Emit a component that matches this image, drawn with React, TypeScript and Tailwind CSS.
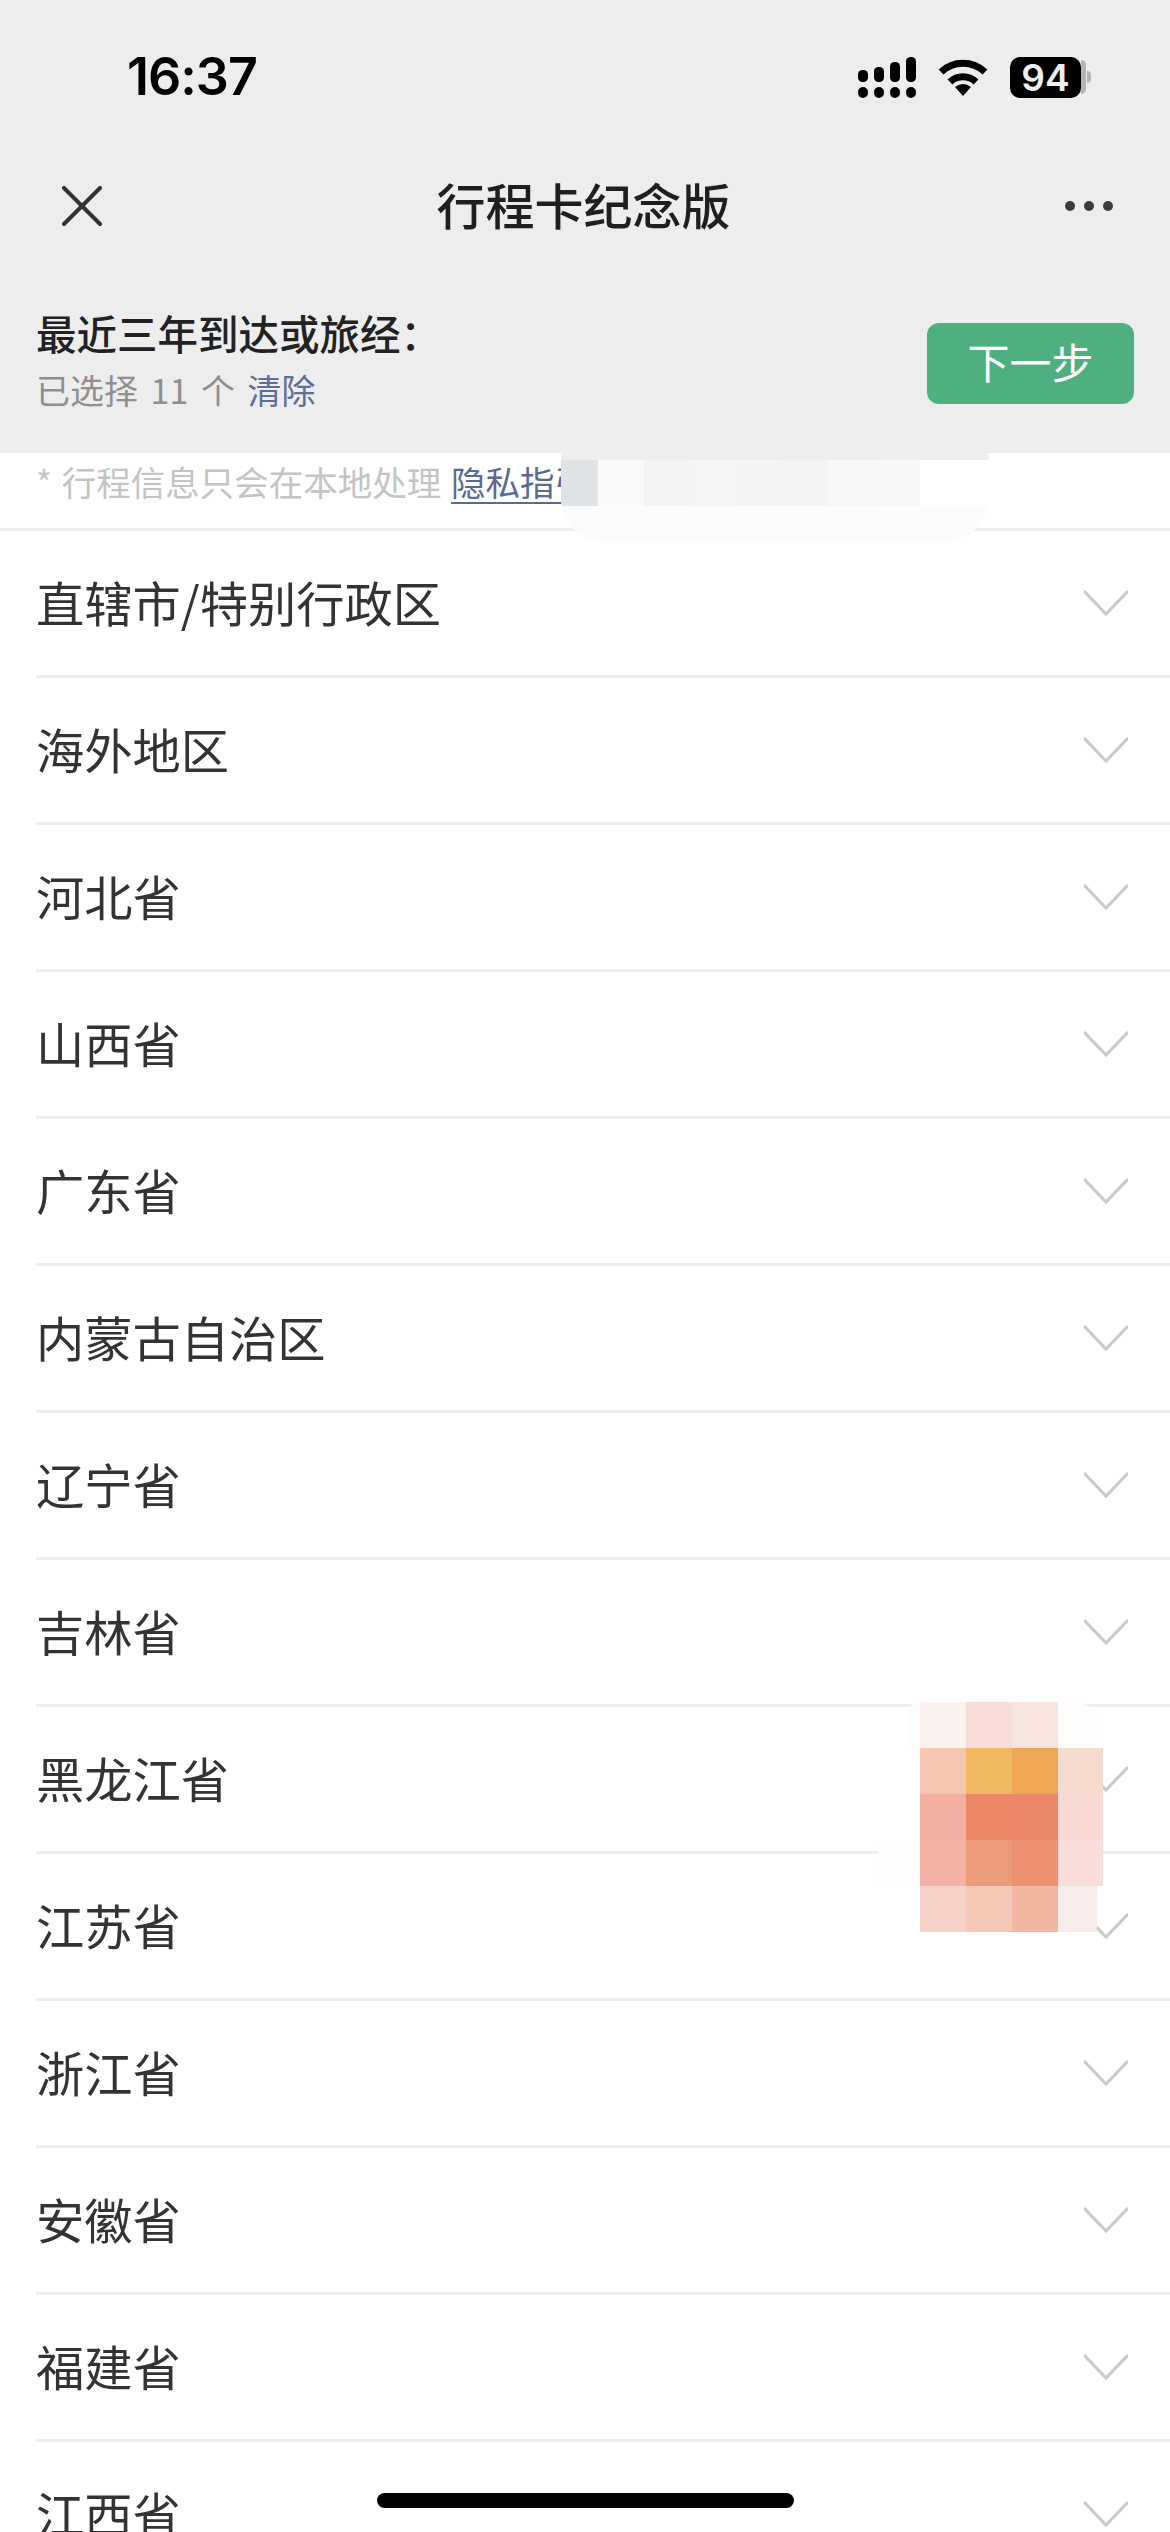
const regions = [
  '直辖市/特别行政区',
  '海外地区',
  '河北省',
  '山西省',
  '广东省',
  '内蒙古自治区',
  '辽宁省',
  '吉林省',
  '黑龙江省',
  '江苏省',
  '浙江省',
  '安徽省',
  '福建省',
  '江西省',
];

const noteCells = ['#fafafa', '#f3f3f3', '#f5f5f5', '#f4f4f4', '#f3f3f3', '#f7f7f7', '#f8f8f8'];

const stickerCells = [
  ['#fbf2f0', '#f8ddd9', '#f8e5e0', '#fefdfb'],
  ['#f5c7b0', '#f0b860', '#eea855', '#f5dbcf'],
  ['#f4afa3', '#ee8765', '#eb876b', '#f9d9d4'],
  ['#f4b2a5', '#ec9c7a', '#ee9072', '#f9dedb'],
  ['#f5d1c9', '#f4c8b5', '#f2b7a1', '#f7ece9'],
];

function SignalIcon() {
  return (
    <svg width="58" height="41" viewBox="0 0 58 41" fill="black">
      <rect x="0" y="13" width="10" height="12" rx="4.5" />
      <rect x="16" y="10" width="10" height="15" rx="4.5" />
      <rect x="32" y="5" width="10" height="20" rx="4.5" />
      <rect x="48" y="0" width="10" height="25" rx="4.5" />
      <rect x="0" y="30" width="10" height="11" rx="5" />
      <rect x="16" y="30" width="10" height="11" rx="5" />
      <rect x="32" y="30" width="10" height="11" rx="5" />
      <rect x="48" y="30" width="10" height="11" rx="5" />
    </svg>
  );
}

function WifiIcon() {
  return (
    <svg width="50" height="37" viewBox="0 0 50 37" fill="none" stroke="black" strokeWidth="7">
      <path d="M3 13 A32 32 0 0 1 47 13" />
      <path d="M12 23 A19 19 0 0 1 38 23" />
      <path d="M17 28 Q25 22 33 28 L25 37 Z" fill="black" stroke="none" />
    </svg>
  );
}

function Chevron() {
  return (
    <svg width="44" height="27" viewBox="0 0 44 27" fill="none" stroke="#c9c9c9" strokeWidth="3">
      <path d="M0 1 L22 24 L44 1" />
    </svg>
  );
}

export default function App() {
  return (
    <div className="relative h-[2532px] w-[1170px] overflow-hidden bg-white font-['Noto_Sans_CJK_SC',sans-serif]">
      {/* Status bar and title */}
      <header className="flex h-[453px] flex-col bg-[#ededed]">
        <div className="flex h-[154px] items-center justify-between pl-[127px] pr-[79px]">
          <span className="font-['Inter',sans-serif] text-[52px] font-semibold leading-none tracking-[-1px] text-black">
            16:37
          </span>
          <div className="flex items-center gap-[22px]">
            <SignalIcon />
            <WifiIcon />
            <div className="flex items-center">
              <div className="flex h-[41px] w-[71px] items-center justify-center rounded-[10px] bg-black font-['Inter',sans-serif] text-[37px] font-semibold leading-none text-[#eeeeee]">
                94
              </div>
              <div className="h-[34px] w-[5px] rounded-r-[5px] bg-[#b4b4b4]" />
              <div className="ml-px h-[12px] w-[4px] rounded-r-[4px] bg-[#b4b4b4]" />
            </div>
          </div>
        </div>

        <div className="flex h-[104px] items-center justify-between pl-[62px] pr-[57px]">
          <svg width="40" height="40" viewBox="0 0 40 40" stroke="#333333" strokeWidth="4" strokeLinecap="round">
            <path d="M2 2 L38 38 M38 2 L2 38" />
          </svg>
          <h1 className="pb-[6px] text-[49px] font-medium leading-none text-[#1f1f1f]">行程卡纪念版</h1>
          <div className="flex w-[48px] justify-between">
            <span className="h-[10px] w-[10px] rounded-full bg-[#3c3c3c]" />
            <span className="h-[10px] w-[10px] rounded-full bg-[#3c3c3c]" />
            <span className="h-[10px] w-[10px] rounded-full bg-[#3c3c3c]" />
          </div>
        </div>

        <div className="flex items-start justify-between pl-[36px] pr-[36px] pt-[49px]">
          <div>
            <p className="text-[40.5px] font-medium leading-[52px] text-[#222222]">最近三年到达或旅经：</p>
            <p className="mt-[5px] text-[34px] leading-[52px] text-[#8f8f8f] [word-spacing:5px]">
              已选择 11 个 <span className="text-[#5c6f9c]">清除</span>
            </p>
          </div>
          <button className="mt-[16px] flex h-[81px] w-[207px] items-center justify-center rounded-[12px] bg-[#4eb07f] pb-[6px] text-[42px] leading-none text-white">
            下一步
          </button>
        </div>
      </header>

      <p className="h-[78px] border-b-[3px] border-[#eeeeee] pl-[36px] pt-[3px] text-[34.5px] leading-[50px] text-[#c4c4c4] [word-spacing:2px]">
        * 行程信息只会在本地处理{' '}
        <span className="text-[#5b6a91] underline decoration-2 underline-offset-[6px]">隐私指引</span>
      </p>

      <ul>
        {regions.map((name) => (
          <li
            key={name}
            className="ml-[36px] flex h-[147px] items-center justify-between border-b-[3px] border-[#eeeeee] pr-[42px] text-[48.25px] leading-none text-[#333333]"
          >
            <span className="pb-[4px]">{name}</span>
            <Chevron />
          </li>
        ))}
      </ul>

      {/* Mosaic over the privacy link */}
      <div className="absolute left-[561px] top-[417px] flex h-[125px] w-[428px] flex-col overflow-hidden rounded-[45px]">
        <div className="h-[43px] bg-[#eeeeee]" />
        <div className="flex h-[46px] bg-white">
          <div className="h-full w-[37px] bg-[#e0e3e6]" />
          {noteCells.map((color, i) => (
            <div key={i} className="h-full w-[46px]" style={{ backgroundColor: color }} />
          ))}
        </div>
        <div className="h-[36px] bg-[#fcfcfc]" />
      </div>

      {/* Mosaic sticker over the list */}
      <div className="absolute left-[907px] top-[1702px] h-[46px] w-[13px] rounded-tl-[20px] bg-[#fdfdfd]" />
      <div className="absolute left-[878px] top-[1840px] h-[46px] w-[42px] bg-[#fdfdfd]" />
      <div className="absolute left-[920px] top-[1702px] grid grid-cols-[46px_46px_46px_45px]">
        {stickerCells.flat().map((color, i) => (
          <div
            key={i}
            className={
              i === 3
                ? 'h-[46px] rounded-tr-[30px]'
                : i === 19
                  ? 'h-[46px] w-[39px]'
                  : 'h-[46px]'
            }
            style={{ backgroundColor: color }}
          />
        ))}
      </div>

      {/* Home indicator */}
      <div className="absolute left-[377px] top-[2493px] h-[15px] w-[417px] rounded-full bg-black" />
    </div>
  );
}
